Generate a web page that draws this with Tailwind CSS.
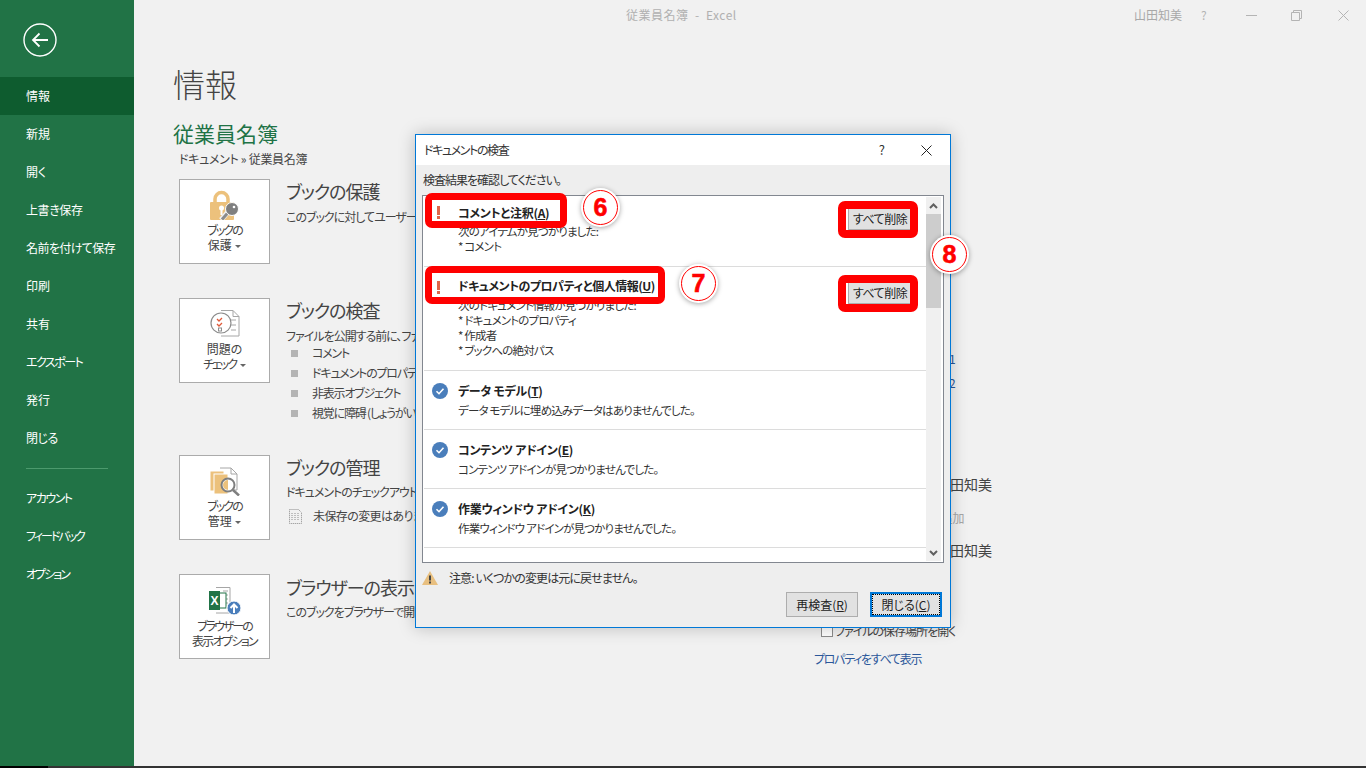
<!DOCTYPE html>
<html lang="ja">
<head>
  <meta charset="UTF-8" />
  <title>従業員名簿 - Excel</title>
  <script src="https://cdn.jsdelivr.net/npm/@tailwindcss/browser@4"></script>
</head>
<body class="w-[1366px] h-[768px] overflow-hidden bg-[#f1f1f1] text-[12px] text-[#444] [font-family:'Noto_Sans_CJK_JP','Noto_Sans',sans-serif] [font-feature-settings:'palt']">
<div class="relative w-[1366px] h-[768px] overflow-hidden">

  <div class="flex h-[766px]">
    <!-- sidebar -->
    <aside class="w-[134px] shrink-0 bg-[#217346] text-white flex flex-col">
      <div class="h-[77px] pl-[23px] pt-[23px]">
        <svg width="34" height="34" viewBox="0 0 34 34" fill="none" stroke="#fff">
          <circle cx="17" cy="17" r="16" stroke-width="1.4"/>
          <path d="M10 17H25M16.5 10.5L10 17L16.5 23.5" stroke-width="1.8"/>
        </svg>
      </div>
      <nav class="flex flex-col">
        <a class="h-[38px] flex items-center pl-[26px] bg-[#0e5c2f]">情報</a>
        <a class="h-[38px] flex items-center pl-[26px]">新規</a>
        <a class="h-[38px] flex items-center pl-[26px]">開く</a>
        <a class="h-[38px] flex items-center pl-[26px] tracking-[-0.4px]">上書き保存</a>
        <a class="h-[38px] flex items-center pl-[26px] tracking-[-0.6px]">名前を付けて保存</a>
        <a class="h-[38px] flex items-center pl-[26px]">印刷</a>
        <a class="h-[38px] flex items-center pl-[26px]">共有</a>
        <a class="h-[38px] flex items-center pl-[26px] tracking-[-1.5px]">エクスポート</a>
        <a class="h-[38px] flex items-center pl-[26px]">発行</a>
        <a class="h-[38px] flex items-center pl-[26px] tracking-[-0.5px]">閉じる</a>
      </nav>
      <div class="ml-[26px] mr-[26px] mt-[11px] mb-[10px] h-px bg-[#4c9a6d]"></div>
      <nav class="flex flex-col">
        <a class="h-[38px] flex items-center pl-[26px] tracking-[-1.5px]">アカウント</a>
        <a class="h-[38px] flex items-center pl-[26px] tracking-[-2px]">フィードバック</a>
        <a class="h-[38px] flex items-center pl-[26px] tracking-[-2px]">オプション</a>
      </nav>
    </aside>

    <!-- backstage -->
    <main class="flex-1 relative">
      <div class="h-[31px] relative">
        <div class="absolute left-[492px] top-[6px] text-[#b0b0b0] tracking-[0.5px]">従業員名簿 &nbsp;-&nbsp; Excel</div>
        <div class="absolute left-[1000px] top-[6px] text-[#a8a8a8]">山田知美</div>
        <div class="absolute left-[1067px] top-[6px] text-[#b4b4b4]">?</div>
        <svg class="absolute left-[1112px] top-[15px]" width="11" height="1"><path d="M0 .5H11" stroke="#b4b4b4"/></svg>
        <svg class="absolute left-[1157px] top-[10px]" width="11" height="11" fill="none" stroke="#b4b4b4"><path d="M.5 2.5h8v8h-8zM2.5 2.5v-2h8v8h-2"/></svg>
        <svg class="absolute left-[1204px] top-[10px]" width="11" height="11" stroke="#b4b4b4"><path d="M.5.5l10 10M10.5.5l-10 10"/></svg>
      </div>

      <div class="pl-[39px]">
        <h1 class="text-[32px] leading-[48px] mt-[28px] text-[#444] font-light">情報</h1>
        <h2 class="text-[21px] leading-[28px] mt-[12px] text-[#217346]">従業員名簿</h2>
        <p class="pl-[6px] mt-[3px] leading-[18px] tracking-[-0.3px]">ドキュメント » 従業員名簿</p>
      </div>

      <div class="pl-[45px] mt-[11px] flex flex-col">
        <section class="flex gap-[16px] h-[85px]">
          <div class="w-[91px] h-[85px] bg-white border border-[#ababab] flex flex-col items-center pt-[10px] leading-[15px] text-center">
            <svg width="32" height="30" viewBox="0 0 32 30">
              <path d="M6 13V9a6.500 6.500 0 0113 0v4" fill="none" stroke="#ecc17c" stroke-width="3.500"/>
              <rect x="1" y="12" width="24" height="18" rx="1" fill="#ecc17c"/>
              <circle cx="12.500" cy="18" r="2.500" fill="#fff"/><rect x="11.500" y="19" width="2" height="6" fill="#fff"/>
              <path d="M12 30l7-8" stroke="#f1f1f1" stroke-width="5"/>
              <path d="M13 29.500l7-8" stroke="#8b8b8b" stroke-width="3"/>
              <circle cx="23" cy="19" r="6.500" fill="#7f7f7f" stroke="#fff"/>
              <circle cx="25" cy="17" r="1.300" fill="#fff"/>
            </svg>
            <span class="mt-[2px] tracking-[-2px]">ブックの</span>
            <span>保護 <i class="inline-block align-middle border-x-[3px] border-x-transparent border-t-[3px] border-t-[#666] ml-px"></i></span>
          </div>
          <div>
            <h3 class="text-[18px] leading-[24px] text-[#444] tracking-[-1px]">ブックの保護</h3>
            <p class="mt-[5px] leading-[18px] tracking-[-1px]">このブックに対してユーザーが行える変更の種類を管理します。</p>
          </div>
        </section>

        <section class="flex gap-[16px] mt-[34px] h-[123px]">
          <div class="w-[91px] h-[85px] bg-white border border-[#ababab] flex flex-col items-center pt-[10px] leading-[15px] text-center">
            <svg width="32" height="30" viewBox="0 0 32 30" fill="none">
              <path d="M12 1.500H24L30 7.500V27H12" fill="#fff" stroke="#a6a6a6"/>
              <path d="M24 1.500V7.500H30M22 11h5M22 16h5M22 21h5" stroke="#a6a6a6"/>
              <circle cx="12" cy="14" r="10" fill="#fff" stroke="#8c8c8c" stroke-width="1.200"/>
              <path d="M8 10l2 2 3-3M8 15l2 2 3-3" stroke="#e05a3a" stroke-width="1.300"/>
              <rect x="9.500" y="19" width="3" height="3" stroke="#8c8c8c"/>
            </svg>
            <span class="mt-[2px]">問題の</span>
            <span class="tracking-[-2px]">チェック <i class="inline-block align-middle border-x-[3px] border-x-transparent border-t-[3px] border-t-[#666] ml-[3px]"></i></span>
          </div>
          <div>
            <h3 class="text-[18px] leading-[24px] tracking-[-1px]">ブックの検査</h3>
            <p class="mt-[5px] leading-[18px] tracking-[-1px]">ファイルを公開する前に、ファイルの次の項目を確認します。</p>
            <ul class="mt-[-2px] leading-[20px] tracking-[-1.2px]">
              <li class="flex items-center"><i class="w-[7px] h-[7px] bg-[#b4b4b4] ml-[5px] mr-[14px]"></i>コメント</li>
              <li class="flex items-center"><i class="w-[7px] h-[7px] bg-[#b4b4b4] ml-[5px] mr-[14px]"></i>ドキュメントのプロパティ、作成者の名前</li>
              <li class="flex items-center"><i class="w-[7px] h-[7px] bg-[#b4b4b4] ml-[5px] mr-[14px]"></i>非表示オブジェクト</li>
              <li class="flex items-center"><i class="w-[7px] h-[7px] bg-[#b4b4b4] ml-[5px] mr-[14px]"></i>視覚に障碍 (しょうがい) のある方が読み取れない内容</li>
            </ul>
          </div>
        </section>

        <section class="flex gap-[16px] mt-[34px] h-[85px]">
          <div class="w-[91px] h-[85px] bg-white border border-[#ababab] flex flex-col items-center pt-[10px] leading-[15px] text-center">
            <svg width="32" height="30" viewBox="0 0 32 30" fill="none">
              <path d="M11 2H22L28 8V24H11" fill="#fff" stroke="#a6a6a6"/>
              <path d="M22 2V8H28" stroke="#a6a6a6"/>
              <rect x="1" y="5" width="14" height="20" fill="#ecc17c" stroke="#fff"/>
              <rect x="5" y="8" width="14" height="20" fill="#ecc17c" stroke="#fff"/>
              <circle cx="19" cy="19" r="6.500" fill="#fff" stroke="#7f7f7f" stroke-width="2"/>
              <path d="M19 14a5 5 0 000 10z" fill="#ecc17c"/>
              <path d="M24 24l6 5.500" stroke="#7f7f7f" stroke-width="2.500"/>
            </svg>
            <span class="mt-[2px] tracking-[-2px]">ブックの</span>
            <span>管理 <i class="inline-block align-middle border-x-[3px] border-x-transparent border-t-[3px] border-t-[#666] ml-px"></i></span>
          </div>
          <div>
            <h3 class="text-[18px] leading-[24px] tracking-[-1px]">ブックの管理</h3>
            <p class="mt-[4px] leading-[18px] tracking-[-1px]">ドキュメントのチェックアウトや変更の管理を行います。</p>
            <p class="mt-[5px] flex items-center leading-[20px] tracking-[-0.6px]">
              <svg class="ml-[2px] mr-[10px]" width="15" height="15" fill="none" stroke="#8c8c8c" stroke-dasharray="1 1"><path d="M1.500.5h9l3 3v11h-12z"/><path d="M4 4v8M7 4v8M10 4v8"/></svg>
              未保存の変更はありません。
            </p>
          </div>
        </section>

        <section class="flex gap-[16px] mt-[34px] h-[85px]">
          <div class="w-[91px] h-[85px] bg-white border border-[#ababab] flex flex-col items-center pt-[11px] leading-[15px] text-center">
            <svg width="34" height="30" viewBox="0 0 34 30" fill="none">
              <path d="M8 1.500H22V27H8" fill="#fff" stroke="#a6a6a6"/>
              <path d="M15 5h5M15 9h5M15 13h5M15 17h5" stroke="#a6a6a6"/>
              <rect x="3" y="7" width="15" height="15" fill="#fff" stroke="#217346"/>
              <rect x="1" y="5" width="11" height="19" fill="#217346"/>
              <text x="2.500" y="19" font-size="12" font-weight="700" fill="#fff" font-family="Liberation Sans">X</text>
              <circle cx="26" cy="22" r="7" fill="#4a7ebb" stroke="#fff"/>
              <path d="M26 27v-8M22.500 22l3.500-3.500 3.500 3.500" stroke="#fff" stroke-width="2"/>
            </svg>
            <span class="mt-[2px] tracking-[-2px]">ブラウザーの</span>
            <span class="tracking-[-1.700px]">表示オプション</span>
          </div>
          <div class="pt-[1px]">
            <h3 class="text-[18px] leading-[24px] tracking-[-1px]">ブラウザーの表示オプション</h3>
            <p class="mt-[4px] leading-[18px] tracking-[-1px]">このブックをブラウザーで開いたときに表示する内容を選択します。</p>
          </div>
        </section>
      </div>

      <!-- right column, mostly behind the dialog -->
      <div class="absolute left-[681px] top-[345px] w-[240px] text-[12px] text-[#2b579a]">
        <p class="absolute left-[134px] top-[5px]">1</p>
        <p class="absolute left-[134px] top-[29px]">2</p>
        <p class="absolute left-[121px] top-[129px] text-[14px] text-[#444] whitespace-nowrap">山田知美</p>
        <p class="absolute left-[78px] top-[164px] text-[#a6a6a6] whitespace-nowrap">作成者の追加</p>
        <p class="absolute left-[121px] top-[195px] text-[14px] text-[#444] whitespace-nowrap">山田知美</p>
      </div>
      <label class="absolute left-[687px] top-[622px] flex items-center gap-[2px] text-[#444] whitespace-nowrap tracking-[-1px]">
        <i class="w-[12px] h-[12px] border border-[#8c8c8c] bg-white"></i>ファイルの保存場所を開く
      </label>
      <a class="absolute left-[680px] top-[650px] text-[#2b579a] whitespace-nowrap tracking-[-1.3px]">プロパティをすべて表示</a>
    </main>
  </div>
  <div class="h-[2px] flex"><div class="w-[48px] bg-black"></div><div class="flex-1 bg-[#333]"></div></div>

  <!-- document inspector dialog -->
  <div class="absolute left-[415px] top-[134px] w-[536px] h-[494px] bg-[#eeeeee] border border-[#0078d7] shadow-[0_0_16px_rgba(0,0,0,0.22)] flex flex-col text-black">
    <header class="h-[30px] shrink-0 bg-white flex items-center pl-[8px] pr-[18px] text-[#333]">
      <span class="flex-1 tracking-[-1.400px]">ドキュメントの検査</span>
      <span class="mr-[36px] text-[13px]">?</span>
      <svg width="11" height="11" stroke="#222"><path d="M.5.5l10 10M10.500.5l-10 10"/></svg>
    </header>
    <p class="pl-[7px] h-[30px] shrink-0 flex items-center text-[#333] tracking-[-1px]">検査結果を確認してください。</p>
    <div class="mx-[6px] h-[368px] border border-[#828790] bg-white flex">
      <div class="flex-1 flex flex-col pl-[1px] min-w-0 text-[11.500px] tracking-[-0.800px]">
        <div class="h-[71px] border-b border-[#dcdcdc] pl-[34px] pt-[8px] relative">
          <svg class="absolute left-[13px] top-[10px]" width="3" height="13" fill="#e0664a"><path d="M0 0h3v9H0zM0 10h3v3H0z"/></svg>
          <p class="font-bold leading-[18px] text-[#222] text-[12px] tracking-[-0.300px]">コメントと注釈(<u>A</u>)</p>
          <p class="mt-[2px] leading-[15px] text-[#333]">次のアイテムが見つかりました:</p>
          <p class="leading-[15px] text-[#333]">* コメント</p>
          <button class="absolute right-[14px] top-[11px] w-[64px] h-[23px] bg-[#e1e1e1] border border-[#adadad] text-[#222] text-[12px] tracking-[-0.500px]">すべて削除</button>
        </div>
        <div class="h-[104px] border-b border-[#dcdcdc] pl-[34px] pt-[10px] relative">
          <svg class="absolute left-[13px] top-[14px]" width="3" height="13" fill="#e0664a"><path d="M0 0h3v9H0zM0 10h3v3H0z"/></svg>
          <p class="font-bold leading-[18px] text-[#222] text-[12px] tracking-[-0.500px]">ドキュメントのプロパティと個人情報(<u>U</u>)</p>
          <p class="mt-[3px] leading-[15px] text-[#333]">次のドキュメント情報が見つかりました:</p>
          <p class="leading-[15px] text-[#333]">* ドキュメントのプロパティ</p>
          <p class="leading-[15px] text-[#333]">* 作成者</p>
          <p class="leading-[15px] text-[#333]">* ブックへの絶対パス</p>
          <button class="absolute right-[14px] top-[14px] w-[64px] h-[23px] bg-[#e1e1e1] border border-[#adadad] text-[#222] text-[12px] tracking-[-0.500px]">すべて削除</button>
        </div>
        <div class="h-[59px] border-b border-[#dcdcdc] pl-[34px] pt-[11px] relative">
          <svg class="absolute left-[8px] top-[12px]" width="16" height="16"><circle cx="8" cy="8" r="8" fill="#4a7ebb"/><path d="M4.500 8.200l2.500 2.500 4.500-5" fill="none" stroke="#fff" stroke-width="1.600"/></svg>
          <p class="font-bold leading-[18px] text-[#222] text-[12px] tracking-[-0.300px]">データ モデル(<u>T</u>)</p>
          <p class="mt-[1px] leading-[18px] text-[#333]">データ モデルに埋め込みデータはありませんでした。</p>
        </div>
        <div class="h-[59px] border-b border-[#dcdcdc] pl-[34px] pt-[11px] relative">
          <svg class="absolute left-[8px] top-[12px]" width="16" height="16"><circle cx="8" cy="8" r="8" fill="#4a7ebb"/><path d="M4.500 8.200l2.500 2.500 4.500-5" fill="none" stroke="#fff" stroke-width="1.600"/></svg>
          <p class="font-bold leading-[18px] text-[#222] text-[12px] tracking-[-0.300px]">コンテンツ アドイン(<u>E</u>)</p>
          <p class="mt-[1px] leading-[18px] text-[#333]">コンテンツ アドインが見つかりませんでした。</p>
        </div>
        <div class="h-[59px] border-b border-[#dcdcdc] pl-[34px] pt-[11px] relative">
          <svg class="absolute left-[8px] top-[12px]" width="16" height="16"><circle cx="8" cy="8" r="8" fill="#4a7ebb"/><path d="M4.500 8.200l2.500 2.500 4.500-5" fill="none" stroke="#fff" stroke-width="1.600"/></svg>
          <p class="font-bold leading-[18px] text-[#222] text-[12px] tracking-[-0.300px]">作業ウィンドウ アドイン(<u>K</u>)</p>
          <p class="mt-[1px] leading-[18px] text-[#333]">作業ウィンドウ アドインが見つかりませんでした。</p>
        </div>
      </div>
      <!-- scrollbar -->
      <div class="w-[15px] shrink-0 mr-[2px] my-px bg-[#f0f0f0] flex flex-col">
        <div class="h-[17px] flex items-center justify-center"><svg width="9" height="6" fill="none" stroke="#606060" stroke-width="2"><path d="M1 5l3.500-3.500L8 5"/></svg></div>
        <div class="h-[94px] bg-[#cdcdcd]"></div>
        <div class="flex-1"></div>
        <div class="h-[17px] flex items-center justify-center"><svg width="9" height="6" fill="none" stroke="#606060" stroke-width="2"><path d="M1 1l3.500 3.500L8 1"/></svg></div>
      </div>
    </div>
    <div class="flex items-center pl-[6px] h-[29px] shrink-0 text-[#333] tracking-[-0.900px]">
      <svg width="16" height="14" class="mr-[11px]"><path d="M8 0l8 14H0z" fill="#e8bf7f"/><path d="M7 4.500h2v5H7zM7 10.500h2v2H7z" fill="#444"/></svg>
      注意: いくつかの変更は元に戻せません。
    </div>
    <div class="flex justify-end gap-[12px] pr-[8px]">
      <button class="w-[72px] h-[25px] bg-[#e1e1e1] border border-[#adadad] text-[#222]">再検査(<u>R</u>)</button>
      <button class="w-[72px] h-[25px] bg-[#e1e1e1] border-2 border-[#0078d7] text-[#222] outline-1 outline-dotted outline-black outline-offset-[-3px]">閉じる(<u>C</u>)</button>
    </div>
  </div>

  <!-- annotations drawn over the screenshot -->
  <div class="absolute left-[425px] top-[193px] w-[142px] h-[35px] border-[7px] border-[#ff0000] rounded-[7px]"></div>
  <div class="absolute left-[425px] top-[266px] w-[240px] h-[38px] border-[7px] border-[#ff0000] rounded-[7px]"></div>
  <div class="absolute left-[838px] top-[201px] w-[80px] h-[37px] border-[8px] border-[#ff0000] rounded-[7px]"></div>
  <div class="absolute left-[838px] top-[275px] w-[80px] h-[37px] border-[8px] border-[#ff0000] rounded-[7px]"></div>

  <div class="absolute left-[581px] top-[188px] w-[39px] h-[39px] rounded-full bg-white outline-[1.500px] outline-[#ff0000] outline-offset-[-3.500px] shadow-[0_1px_5px_rgba(0,0,0,0.35)] flex items-center justify-center text-[25px] font-bold text-[#ff0000] [-webkit-text-stroke:0.600px_#ff0000] [font-family:'Liberation_Sans',sans-serif]">6</div>
  <div class="absolute left-[679px] top-[264px] w-[39px] h-[39px] rounded-full bg-white outline-[1.500px] outline-[#ff0000] outline-offset-[-3.500px] shadow-[0_1px_5px_rgba(0,0,0,0.35)] flex items-center justify-center text-[25px] font-bold text-[#ff0000] [-webkit-text-stroke:0.600px_#ff0000] [font-family:'Liberation_Sans',sans-serif]">7</div>
  <div class="absolute left-[930px] top-[235px] w-[39px] h-[39px] rounded-full bg-white outline-[1.500px] outline-[#ff0000] outline-offset-[-3.500px] shadow-[0_1px_5px_rgba(0,0,0,0.35)] flex items-center justify-center text-[25px] font-bold text-[#ff0000] [-webkit-text-stroke:0.600px_#ff0000] [font-family:'Liberation_Sans',sans-serif]">8</div>
</div>
</body>
</html>
